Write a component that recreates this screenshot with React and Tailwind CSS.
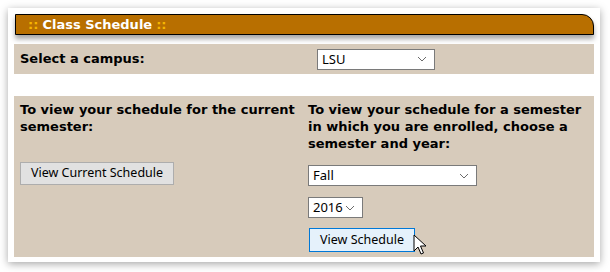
import React from 'react';

function Chevron() {
  return (
    <svg width="10" height="6" viewBox="0 0 10 6" className="shrink-0">
      <path d="M1 1 L5 5 L9 1" fill="none" stroke="#6b6b6b" strokeWidth="1" />
    </svg>
  );
}

function Select({ value, className }) {
  return (
    <div className={`flex items-center justify-between bg-white border border-[#7a7a7a] pl-[4px] pr-[7px] text-[13px] font-normal text-black font-['Noto_Sans',sans-serif] ${className}`}>
      <span className="leading-none">{value}</span>
      <Chevron />
    </div>
  );
}

function Cursor() {
  return (
    <svg width="14" height="22" viewBox="0 0 14 22" className="absolute left-[413px] top-[234px]">
      <path d="M1 1 L1 17 L5 13 L8 20 L10.5 19 L7.5 12 L13 12 Z" fill="#fff" stroke="#000" strokeWidth="1" strokeLinejoin="round" />
    </svg>
  );
}

export default function App() {
  return (
    <div className="relative w-[610px] h-[272px] bg-white font-['DejaVu_Sans',sans-serif] overflow-hidden">
      <div className="ml-2 mt-2 w-[592px] h-[254px] bg-white shadow-[0_2px_8px_rgba(0,0,0,0.35)] pt-[6px] px-[6px]">
        {/* title bar */}
        <div className="ml-[1px] w-[579px] h-[21px] bg-[#b86f00] border border-black rounded-tr-[12px] shadow-[0_4px_5px_rgba(0,0,0,0.35)] flex items-center pl-[12px] text-[13px] font-bold">
          <span className="text-[#f7b500] mr-[4px]">::</span>
          <span className="text-white">Class Schedule</span>
          <span className="text-[#f7b500] ml-[4px]">::</span>
        </div>

        {/* campus row */}
        <div className="mt-[9px] w-[580px] h-[30px] bg-[#d7cbbb] flex items-center text-[13px] font-bold text-black">
          <div className="w-[303px] pl-[6px]">Select a campus:</div>
          <Select value="LSU" className="w-[118px] h-[21px]" />
        </div>

        {/* schedule row */}
        <div className="mt-[22px] w-[580px] h-[161px] bg-[#d7cbbb] flex text-[13px] text-black">
          <div className="w-[288px] pl-[6px] pt-[5px]">
            <div className="font-bold leading-[17px] w-[280px]">To view your schedule for the current semester:</div>
            <button className="mt-[27px] w-[154px] h-[23px] bg-[#e1e1e1] border border-[#adadad] text-[12.5px] font-['Noto_Sans',sans-serif] leading-none">View Current Schedule</button>
          </div>
          <div className="flex-1 pl-[6px] pt-[5px]">
            <div className="font-bold leading-[17px] w-[280px]">To view your schedule for a semester in which you are enrolled, choose a semester and year:</div>
            <Select value="Fall" className="mt-[13px] w-[169px] h-[21px]" />
            <Select value="2016" className="mt-[11px] w-[55px] h-[21px]" />
            <button className="mt-[10px] ml-[1px] w-[106px] h-[24px] bg-[#e5f1fb] border border-[#0078d7] text-[12.5px] font-['Noto_Sans',sans-serif] leading-none">View Schedule</button>
          </div>
        </div>
      </div>
      <Cursor />
    </div>
  );
}
